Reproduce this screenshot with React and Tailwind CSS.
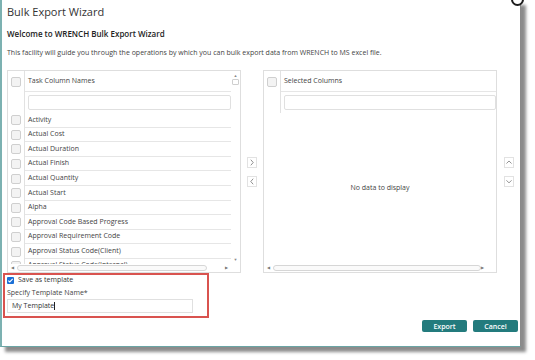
import React from 'react'

const items = [
  'Activity',
  'Actual Cost',
  'Actual Duration',
  'Actual Finish',
  'Actual Quantity',
  'Actual Start',
  'Alpha',
  'Approval Code Based Progress',
  'Approval Requirement Code',
  'Approval Status Code(Client)',
  'Approval Status Code(Internal)',
]

const Box = () => (
  <div className="w-[10px] h-[10px] rounded-[2px] border border-[#cfcfcf] bg-[#f3f3f3]" />
)

const Chevron = ({ dir }) => {
  const d = {
    right: 'M3.5 2 L6.5 5.5 L3.5 9',
    left: 'M6.5 2 L3.5 5.5 L6.5 9',
    up: 'M1.8 6.8 L5 3.6 L8.2 6.8',
    down: 'M1.8 4 L5 7.2 L8.2 4',
  }[dir]
  return (
    <div className="w-[10px] h-[11px] border border-[#e2e2e2] bg-white flex items-center justify-center">
      <svg width="10" height="11" viewBox="0 0 10 11">
        <path d={d} fill="none" stroke="#666" strokeWidth="0.9" />
      </svg>
    </div>
  )
}

const HScroll = ({ thumb }) => (
  <div className="h-[8px] shrink-0 flex items-center px-[3px]">
    <span className="text-[4px] leading-none text-[#777]">◀</span>
    <div className={`${thumb} h-[6px] ml-[3px] rounded-[3px] border border-[#d6d6d6] bg-[#fafafa]`} />
    <div className="flex-1" />
    <span className="text-[4px] leading-none text-[#777] mr-[9px]">▶</span>
  </div>
)

const Header = ({ label }) => (
  <>
    <div className="h-[21px] shrink-0 flex">
      <div className="w-[17px] border-r border-[#e2e2e2] flex items-center justify-center">
        <Box />
      </div>
      <div className="flex-1 border-b border-[#e6e6e6] flex items-center pl-[3px] text-[7px] text-[#444]">
        {label}
      </div>
    </div>
    <div className="h-[21px] shrink-0 flex">
      <div className="w-[17px] border-r border-[#e2e2e2]" />
      <div className="flex-1 flex items-center pl-[3px]">
        <div className="w-full h-[15px] border border-[#e0e0e0] rounded-[2px] bg-white" />
      </div>
    </div>
  </>
)

export default function App() {
  return (
    <div className="w-[535px] h-[360px] bg-white overflow-hidden relative" style={{ fontFamily: '"Open Sans", sans-serif' }}>
      <div className="w-[521px] h-[347px] bg-white border-l-2 border-b border-r border-l-[#7cb1b1] border-b-[#6aa5a5] border-r-[#8a8a8a] shadow-[5px_5px_3px_rgba(0,0,0,0.45)] flex flex-col">
        <div className="pl-[5px]">
          <div className="pt-[4px] h-[20px] leading-[16px] text-[11px] text-[#333]">Bulk Export Wizard</div>
          <div className="mt-[8px] leading-[12px] text-[8px] font-semibold text-[#222]">Welcome to WRENCH Bulk Export Wizard</div>
          <div className="mt-[8px] leading-[10px] text-[7px] text-[#444]">
            This facility will guide you through the operations by which you can bulk export data from WRENCH to MS excel file.
          </div>
          <div className="mt-[12px] flex h-[203px]">
            <div className="w-[234px] border border-[#dedede] flex flex-col">
              <div className="flex-1 flex overflow-hidden">
                <div className="flex-1 flex flex-col overflow-hidden">
                  <Header label="Task Column Names" />
                  {items.map((t) => (
                    <div key={t} className="h-[14.6px] shrink-0 flex">
                      <div className="w-[17px] border-r border-[#e2e2e2] flex items-center justify-center">
                        <Box />
                      </div>
                      <div className="flex-1 border-b border-[#e6e6e6] flex items-center pl-[3px] text-[7px] text-[#444] whitespace-nowrap">
                        {t}
                      </div>
                    </div>
                  ))}
                </div>
                <div className="w-[9px] flex flex-col items-center pt-[2px]">
                  <span className="text-[4px] leading-[5px] text-[#888]">▲</span>
                  <div className="w-[7px] h-[6px] mt-[1px] border border-[#cfcfcf] rounded-[1px]" />
                  <div className="flex-1" />
                  <span className="text-[4px] leading-[5px] text-[#888] mb-[2px]">▼</span>
                </div>
              </div>
              <HScroll thumb="w-[190px]" />
            </div>
            <div className="w-[22px] flex flex-col items-center justify-center gap-[8px]">
              <Chevron dir="right" />
              <Chevron dir="left" />
            </div>
            <div className="w-[234px] border border-[#dedede] flex flex-col">
              <Header label="Selected Columns" />
              <div className="flex-1 flex items-center justify-center text-[7px] text-[#444]">No data to display</div>
              <HScroll thumb="w-[209px]" />
            </div>
            <div className="flex-1 flex flex-col items-center justify-center gap-[8px]">
              <Chevron dir="up" />
              <Chevron dir="down" />
            </div>
          </div>
        </div>
        <div className="ml-[1px] w-[206px] border-2 border-[#d9534f] px-[2px] pb-[3px]">
          <div className="h-[11px] flex items-center gap-[4px]">
            <div className="w-[7px] h-[7px] rounded-[1px] bg-[#1a6fd6] flex items-center justify-center">
              <svg width="7" height="7" viewBox="0 0 7 7">
                <path d="M1.3 3.6 L2.8 5 L5.7 1.9" fill="none" stroke="white" strokeWidth="1.1" />
              </svg>
            </div>
            <span className="text-[7px] text-[#333]">Save as template</span>
          </div>
          <div className="mt-[2px] h-[10px] leading-[10px] text-[7px] text-[#444]">Specify Template Name*</div>
          <div className="mt-[1px] w-[186px] h-[14px] border border-[#e0e0e0] flex items-center pl-[4px] text-[7px] text-[#333]">
            My Template<span className="w-[1px] h-[8px] bg-[#222]" />
          </div>
        </div>
        <div className="mt-[2px] flex justify-end gap-[6px] pr-[2px]">
          <button className="w-[45px] h-[12px] rounded-[2px] bg-[#237b7d] text-white text-[7px] font-semibold leading-none">Export</button>
          <button className="w-[45px] h-[12px] rounded-[2px] bg-[#237b7d] text-white text-[7px] font-semibold leading-none">Cancel</button>
        </div>
      </div>
      <div className="absolute left-[511px] top-[-7px] w-[13px] h-[13px] rounded-full border-2 border-[#1d1d1d] bg-white" />
    </div>
  )
}
